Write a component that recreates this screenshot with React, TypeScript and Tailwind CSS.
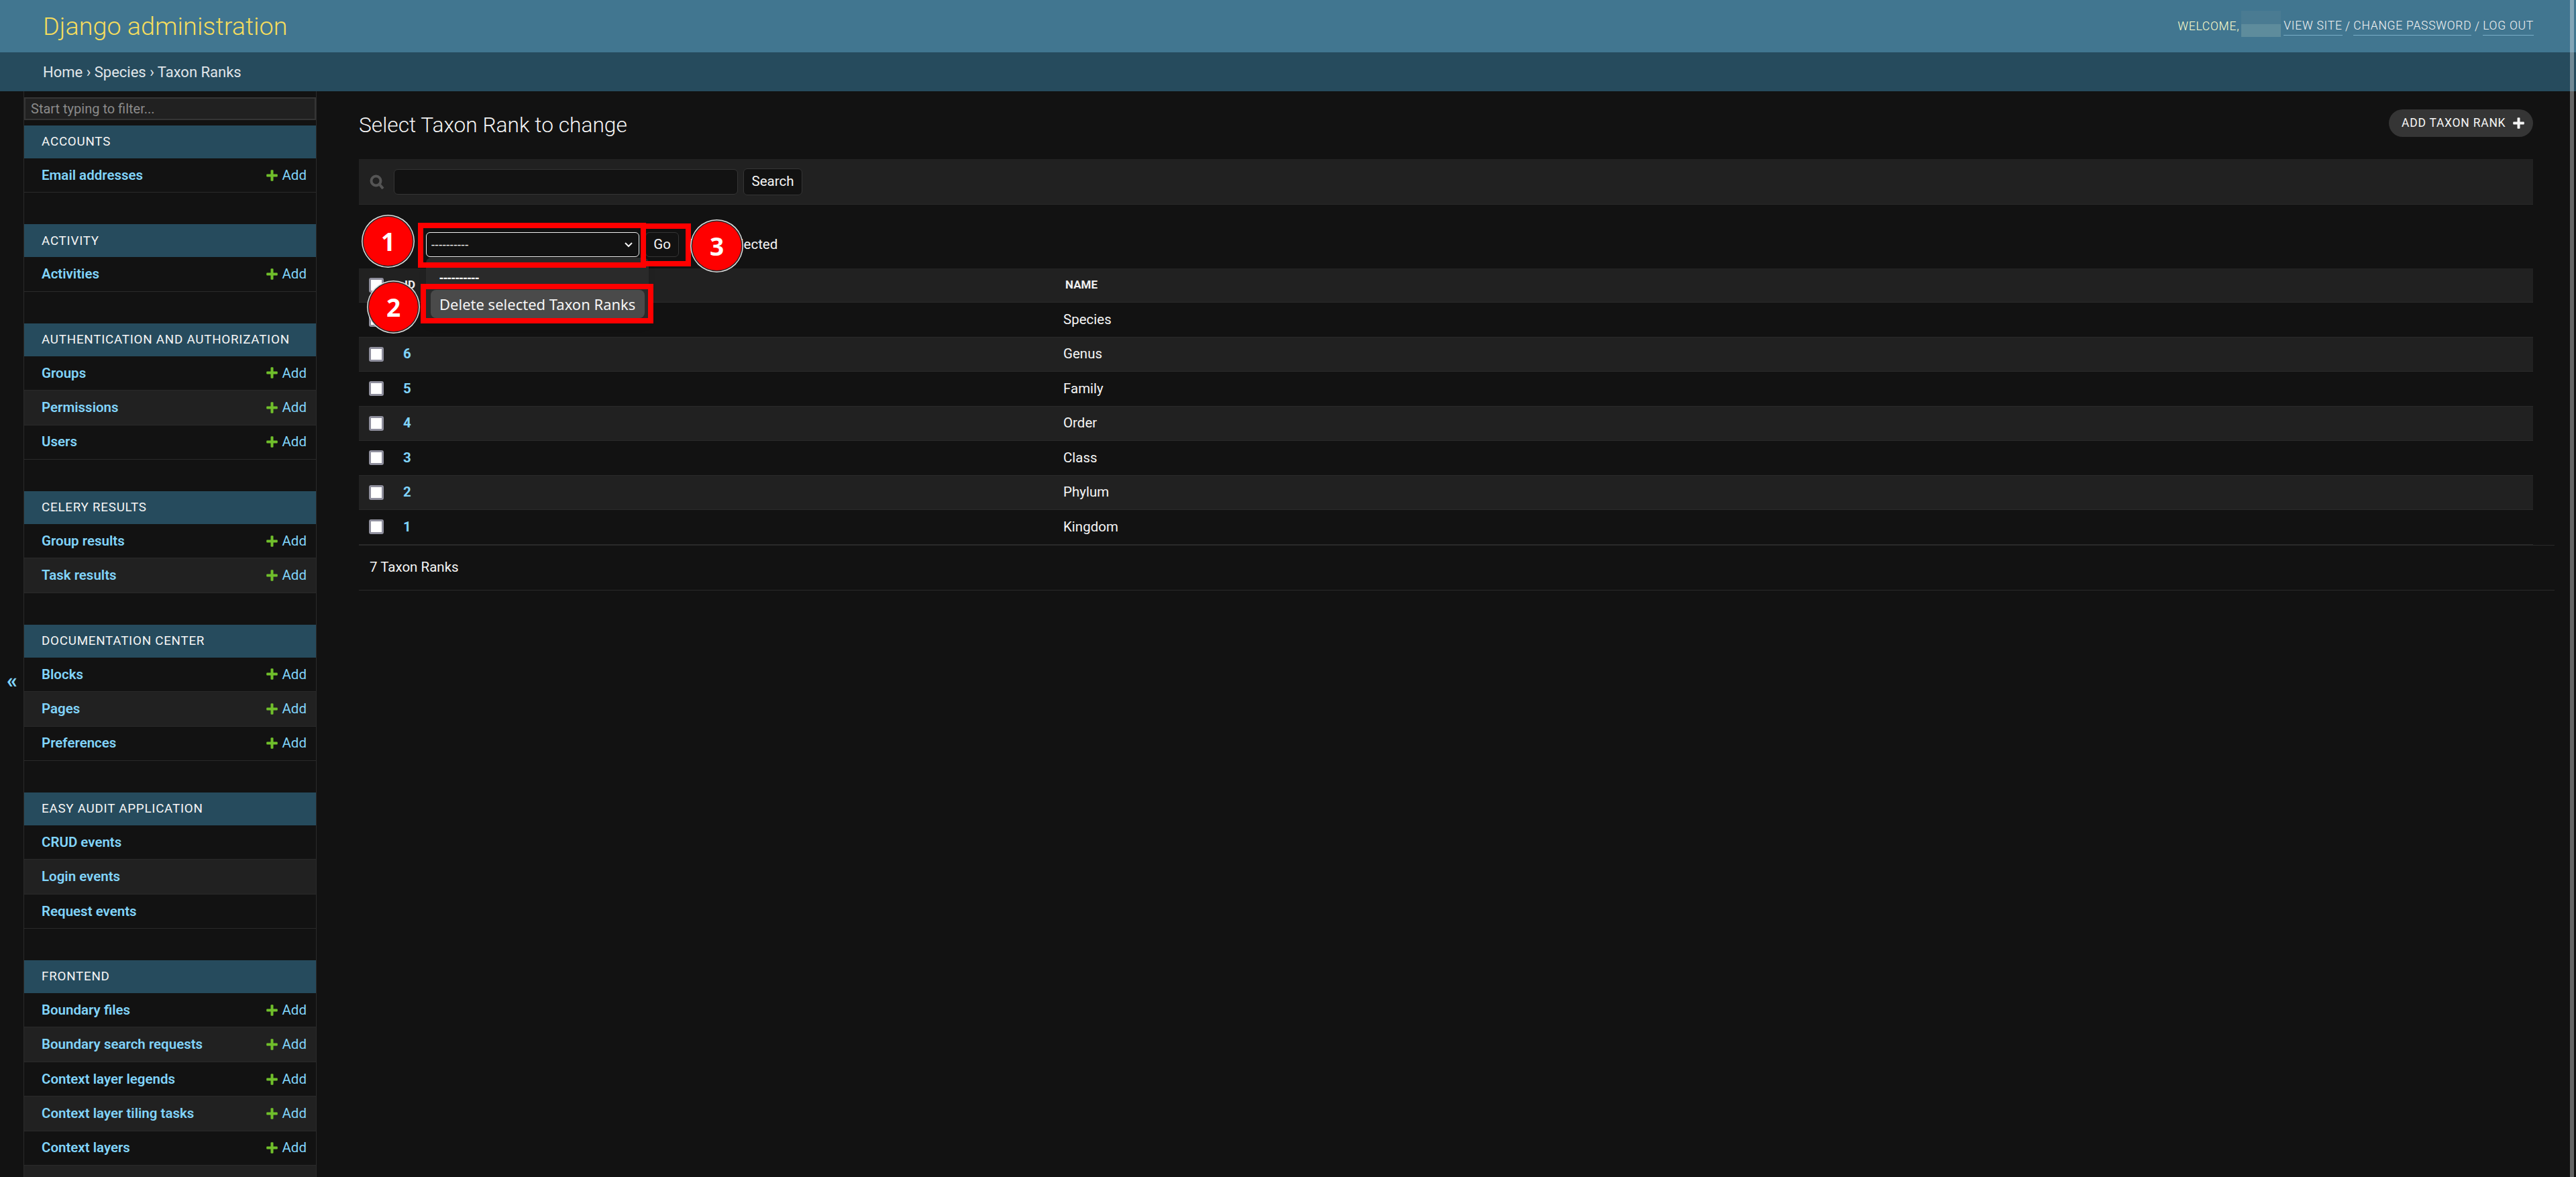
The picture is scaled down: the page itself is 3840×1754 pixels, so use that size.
type ModelRow = { name: string; add?: boolean }
type AppSection = { title: string; models: ModelRow[] }

const sections: AppSection[] = [
  { title: "Accounts", models: [{ name: "Email addresses", add: true }] },
  { title: "Activity", models: [{ name: "Activities", add: true }] },
  {
    title: "Authentication and Authorization",
    models: [
      { name: "Groups", add: true },
      { name: "Permissions", add: true },
      { name: "Users", add: true },
    ],
  },
  {
    title: "Celery Results",
    models: [
      { name: "Group results", add: true },
      { name: "Task results", add: true },
    ],
  },
  {
    title: "Documentation Center",
    models: [
      { name: "Blocks", add: true },
      { name: "Pages", add: true },
      { name: "Preferences", add: true },
    ],
  },
  {
    title: "Easy Audit Application",
    models: [{ name: "CRUD events" }, { name: "Login events" }, { name: "Request events" }],
  },
  {
    title: "Frontend",
    models: [
      { name: "Boundary files", add: true },
      { name: "Boundary search requests", add: true },
      { name: "Context layer legends", add: true },
      { name: "Context layer tiling tasks", add: true },
      { name: "Context layers", add: true },
      { name: "Contexts", add: true },
    ],
  },
]

const ranks = [
  { id: 7, name: "Species" },
  { id: 6, name: "Genus" },
  { id: 5, name: "Family" },
  { id: 4, name: "Order" },
  { id: 3, name: "Class" },
  { id: 2, name: "Phylum" },
  { id: 1, name: "Kingdom" },
]

// Django's blocky add icon
function Cross({ className }: { className: string }) {
  return (
    <svg viewBox="0 0 17 17" className={className} fill="currentColor">
      <path d="M6.5 1.2q0-1 1-1h2q1 0 1 1V6.5h5.3q1 0 1 1v2q0 1-1 1H10.500v5.300q0 1-1 1h-2q-1 0-1-1V10.500H1.200q-1 0-1-1v-2q0-1 1-1H6.500z" />
    </svg>
  )
}

function Sidebar() {
  return (
    <nav className="w-[437px] shrink-0 border-x border-[#2a2a2a] pt-[9px]">
      <input
        placeholder="Start typing to filter..."
        className="block w-full h-[34px] bg-[#212121] border-2 border-[#353535] px-2 text-[20px] text-[#f5dd5d] placeholder:text-[#8a8a8a] outline-none"
      />
      <div className="mt-2 flex flex-col gap-[47px]">
        {sections.map((section) => (
          <section key={section.title}>
            <h2 className="h-[49px] bg-[#264b5d] pl-[26px] flex items-center uppercase text-[18.8px] tracking-[0.75px] text-[#f5f5f5]">
              {section.title}
            </h2>
            {section.models.map((model, i) => (
              <div
                key={model.name}
                className={`h-[51.4px] border-b border-[#2a2a2a] pl-[26px] pr-[14px] flex items-center justify-between text-[20.5px] ${
                  i % 2 ? "bg-[#212121]" : "bg-[#121212]"
                }`}
              >
                <span className="font-semibold text-[#81d4fa]">{model.name}</span>
                {model.add && (
                  <span className="flex items-center gap-[7px] text-[#81d4fa]">
                    <Cross className="size-[17px] text-[#70bf2b]" />
                    Add
                  </span>
                )}
              </div>
            ))}
          </section>
        ))}
      </div>
    </nav>
  )
}

function Callout({ n, className }: { n: number; className: string }) {
  return (
    <div
      className={`absolute size-[73px] rounded-full bg-[#ff0000] shadow-[0_0_0_1.500px_#2a2a2a,0_0_0_3px_#dddddd] flex items-center justify-center font-['Open_Sans',sans-serif] text-[37px] font-bold text-white z-30 ${className}`}
    >
      {n}
    </div>
  )
}

function Checkbox() {
  return (
    <input
      type="checkbox"
      readOnly
      className="appearance-none block shrink-0 size-[22px] rounded-[3px] border-[3px] border-[#8f8f9d] bg-white"
    />
  )
}

function ActionsBar() {
  return (
    <div className="relative h-[95px] flex items-start pl-[100px] pt-[41px] text-[20.5px] text-[#f5f5f5]">
      <div className="w-[318px] h-[37px] rounded-md border border-[#f0f0f0] bg-[#121212] flex items-center justify-between pl-[7px] pr-[8px] text-[18px] tracking-[0.6px]">
        ----------
        <svg width="14" height="10" viewBox="0 0 14 10" fill="none" stroke="#f5f5f5" strokeWidth="2">
          <path d="M2 2l5 5 5-5" />
        </svg>
      </div>
      <button className="ml-[9px] w-[50px] h-[37px] rounded-md border border-[#353535] bg-[#121212]">Go</button>
      <span className="ml-[13px] leading-[36px]">0 of 7 selected</span>

      {/* open select list */}
      <div className="absolute left-[100px] top-[79px] w-[332px] h-[92px] rounded-t-lg bg-[#2a2a2a] shadow-lg z-10 pl-[7px] pr-[6px] pt-[9px] font-['Noto_Sans',sans-serif] text-[22px]">
        <div className="h-[39px] pl-[13px] flex items-center font-bold text-[18.500px]">----------</div>
        <div className="h-[42px] pl-[13px] flex items-center rounded-lg bg-[#4a4a4a]">Delete selected Taxon Ranks</div>
      </div>

      {/* step markers */}
      <div className="absolute left-[88px] top-[27px] w-[340px] h-[67px] border-8 border-[#ff0000] z-20" />
      <div className="absolute left-[420px] top-[28px] w-[75px] h-[64px] border-8 border-[#ff0000] z-20" />
      <div className="absolute left-[92px] top-[118px] w-[347px] h-[59px] border-8 border-[#ff0000] z-20" />
      <Callout n={1} className="left-[7px] top-[18px]" />
      <Callout n={2} className="left-[15px] top-[116px]" />
      <Callout n={3} className="left-[497px] top-[25px]" />
    </div>
  )
}

function ResultsTable() {
  return (
    <div>
      <div className="h-[51px] bg-[#212121] border-b border-[#2a2a2a] flex items-center uppercase text-[17px] font-bold text-[#f0f0f0]">
        <div className="w-[1050px] pl-[15px] flex items-center gap-[31px]">
          <Checkbox />
          <span>ID</span>
        </div>
        <span className="pl-[3px]">Name</span>
      </div>
      {ranks.map((rank, i) => (
        <div
          key={rank.id}
          className={`h-[51.500px] border-b border-[#2a2a2a] flex items-center text-[20.5px] ${
            i % 2 ? "bg-[#212121]" : "bg-[#121212]"
          }`}
        >
          <div className="w-[1050px] pl-[15px] flex items-center gap-[29px]">
            <Checkbox />
            <a className="font-bold text-[#81d4fa]">{rank.id}</a>
          </div>
          <span className="text-[#f5f5f5]">{rank.name}</span>
        </div>
      ))}
    </div>
  )
}

export default function App() {
  return (
    <div className="relative h-screen overflow-hidden bg-[#121212] font-['Roboto',sans-serif] flex flex-col">
      <header className="h-[78px] shrink-0 bg-[#417690] flex items-center justify-between pl-[64px] pr-[63px]">
        <h1 className="text-[37.8px] font-light text-[#f5dd5d]">Django administration</h1>
        <div className="flex items-center text-[17.5px] font-light tracking-[0.75px] uppercase text-[#f5f5f5]">
          <span className="text-[#ffffcc]">Welcome,</span>
          {/* masked user name */}
          <span className="ml-[3px] mr-[4px] -mt-[8px] w-[59px] flex flex-col">
            <span className="h-[20px] bg-[#4a7b92]" />
            <span className="h-[19px] bg-[#5e8c9c]" />
          </span>
          <span className="border-b border-[#79aec8]">View site</span>
          <span className="mx-[4.5px]">/</span>
          <span className="border-b border-[#79aec8]">Change password</span>
          <span className="mx-[4.5px]">/</span>
          <span className="border-b border-[#79aec8]">Log out</span>
        </div>
      </header>
      <div className="h-[58px] shrink-0 bg-[#264b5d] pl-[64px] flex items-center text-[22px] text-[#e0e6ea]">
        Home › Species › Taxon Ranks
      </div>

      <div className="flex-1 min-h-0 flex pl-[35px]">
        <Sidebar />
        <main className="flex-1 min-w-0 pl-[63px] pr-[64px] pt-[27px]">
          <div className="flex items-center justify-between h-[41px] mb-[33px]">
            <h2 className="pt-[6px] text-[31.700px] font-light text-[#f5f5f5]">Select Taxon Rank to change</h2>
            <button className="w-[215px] h-[41px] pl-[19px] pr-[13px] rounded-full bg-[#353535] flex items-center justify-between uppercase text-[17.500px] tracking-[0.75px] text-[#f5f5f5]">
              Add Taxon Rank
              <Cross className="size-[17px]" />
            </button>
          </div>
          <div className="h-[68px] bg-[#212121] border-b border-[#2a2a2a] flex items-center pl-[16px] text-[20.5px] text-[#f5f5f5]">
            <svg viewBox="0 0 22 22" className="size-[22px] mr-[14px]" fill="none" stroke="#555555" strokeWidth="4">
              <circle cx="9.500" cy="9.500" r="7" />
              <path d="M14.500 14.500L20 21" />
            </svg>
            <div className="w-[513px] h-[38px] rounded-md border border-[#353535] bg-[#121212]" />
            <button className="ml-[8px] w-[88px] h-[40px] rounded-md border border-[#353535] bg-[#121212]">Search</button>
          </div>
          <ActionsBar />
          <ResultsTable />
          <div className="h-[68px] border-y border-[#2a2a2a] pl-[16px] flex items-center text-[20.5px] text-[#f5f5f5] -mr-[32px]">
            7 Taxon Ranks
          </div>
        </main>
      </div>

      <span className="absolute left-[10px] top-[998px] text-[#81d4fa] text-[32px] font-bold leading-none">«</span>
      {/* page scrollbar */}
      <div className="absolute right-[3px] top-0 bottom-0 w-[6px] bg-white/35" />
    </div>
  )
}
